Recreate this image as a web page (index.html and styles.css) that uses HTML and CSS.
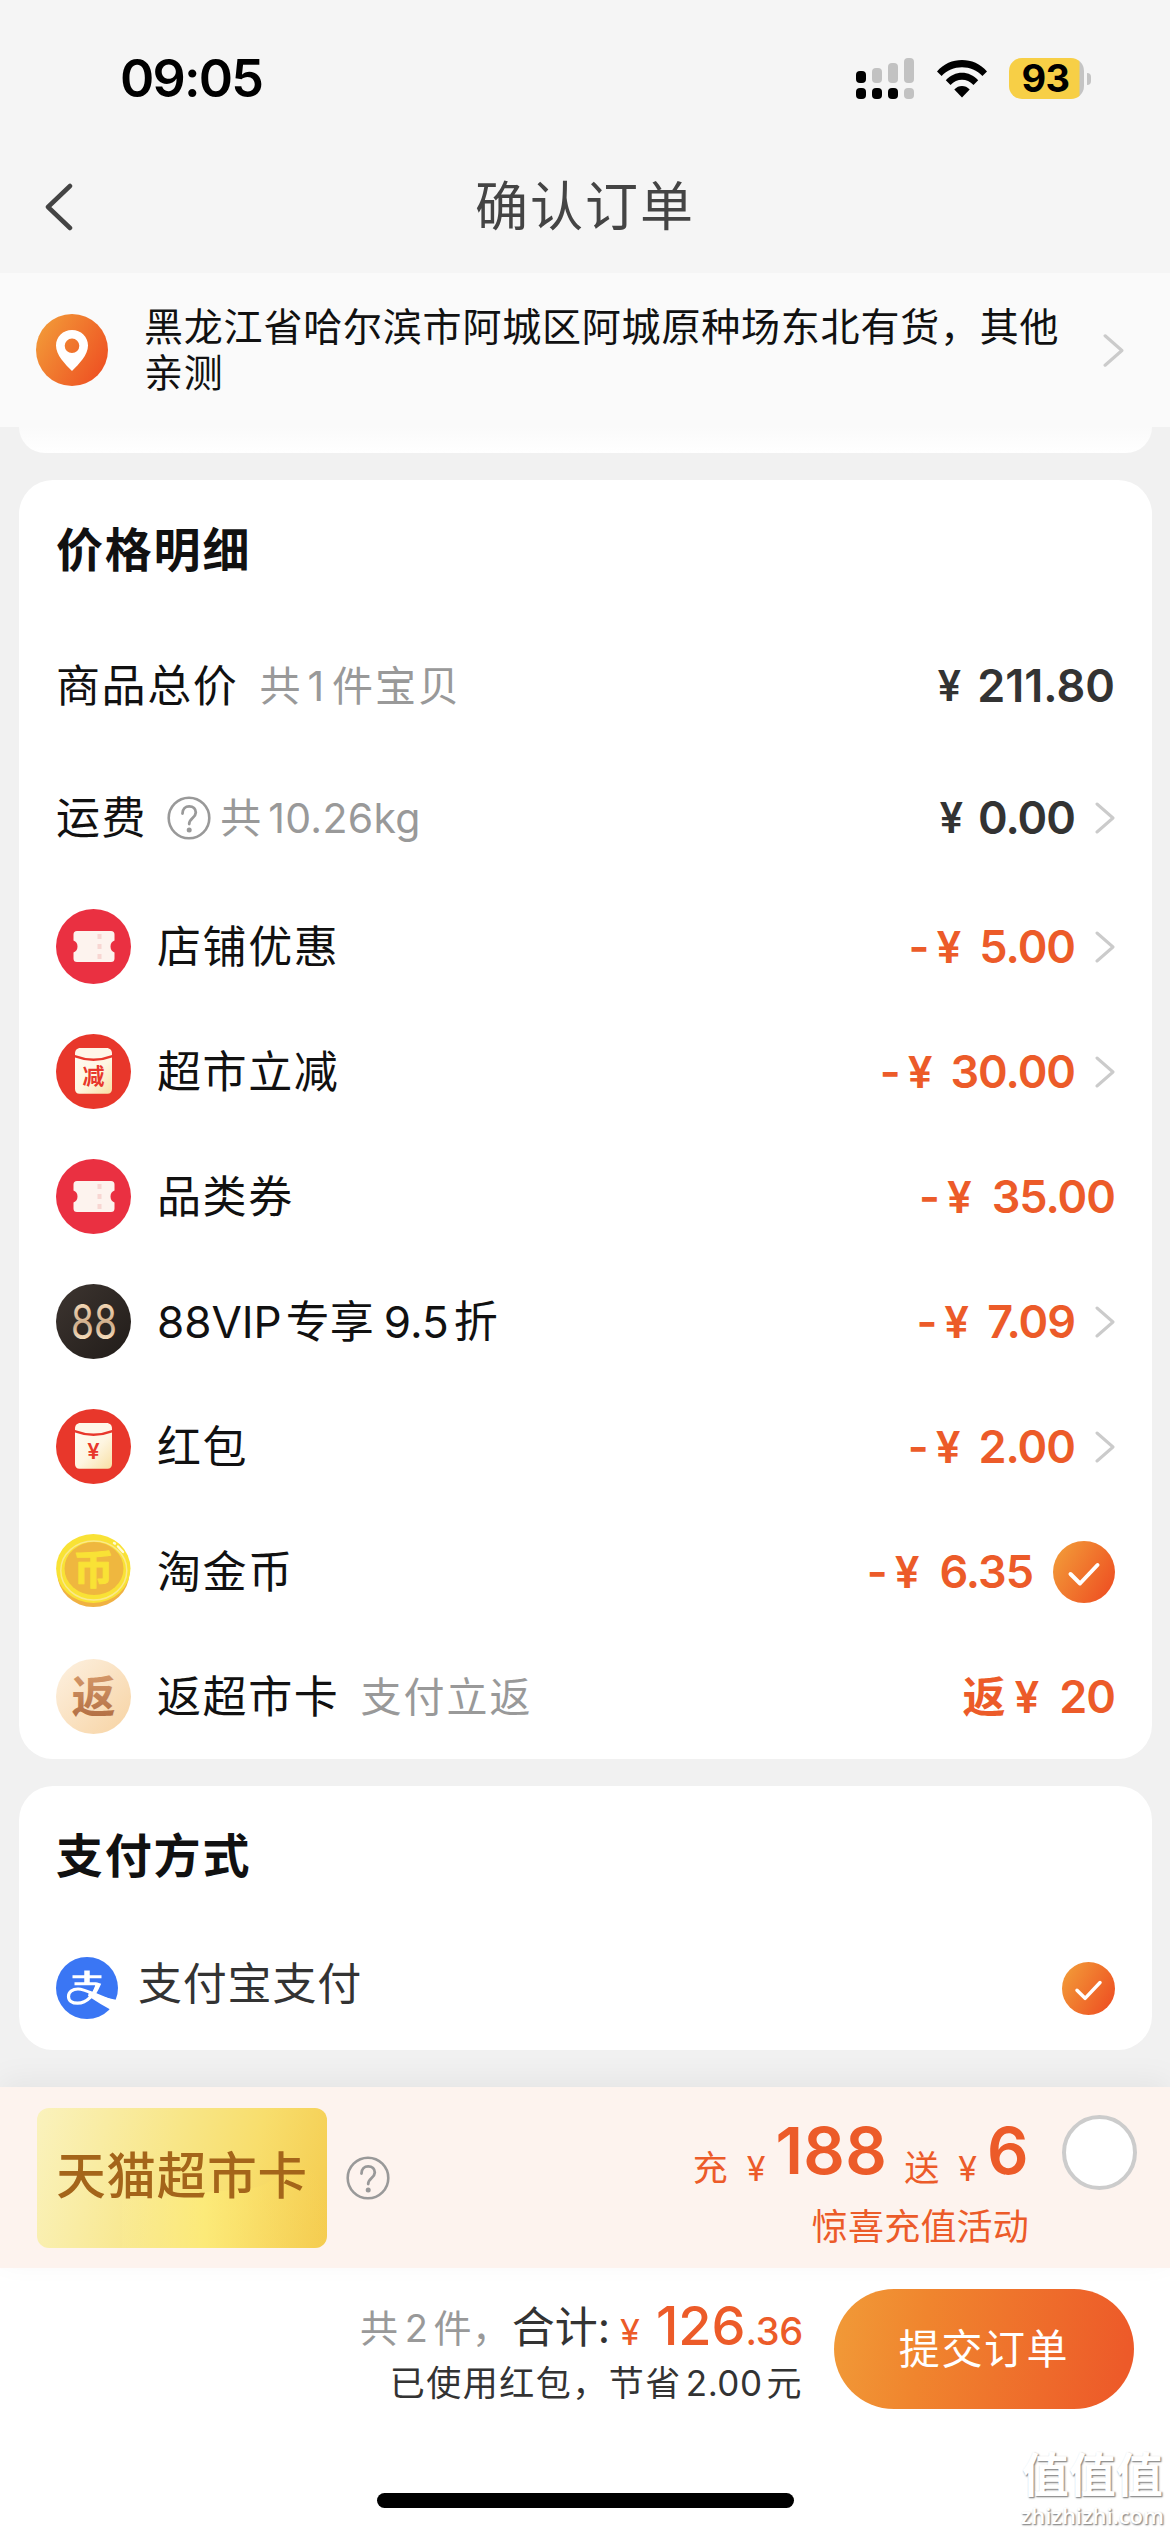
FILE: index.html
```html
<!DOCTYPE html>
<html lang="zh-CN">
<head>
<meta charset="utf-8">
<title>确认订单</title>
<link rel="stylesheet" href="styles.css">
</head>
<body>
<svg class="defs" width="0" height="0" aria-hidden="true">
  <defs>
    <linearGradient id="orange" x1="0" x2="1" y1="0.2" y2="0.8"><stop offset="0" stop-color="#f29a38"/><stop offset="1" stop-color="#ee4f22"/></linearGradient>
    <linearGradient id="paper" x1="0" x2="1" y1="0" y2="1"><stop offset="0" stop-color="#fffaf0"/><stop offset="0.5" stop-color="#fef6e2"/><stop offset="1" stop-color="#f8dfa4"/></linearGradient>
    <linearGradient id="cream" x1="0" x2="1" y1="0" y2="1"><stop offset="0" stop-color="#fdf1e1"/><stop offset="1" stop-color="#f7d3a3"/></linearGradient>
    <linearGradient id="bronze" x1="0" x2="0" y1="0" y2="1"><stop offset="0" stop-color="#dda374"/><stop offset="1" stop-color="#ad683d"/></linearGradient>
    <linearGradient id="night" x1="0" x2="1" y1="0" y2="1"><stop offset="0" stop-color="#3d3530"/><stop offset="1" stop-color="#211c19"/></linearGradient>
    <linearGradient id="sand" x1="0" x2="0" y1="0" y2="1"><stop offset="0.2" stop-color="#f3d7b5"/><stop offset="0.55" stop-color="#cfae8c"/><stop offset="0.8" stop-color="#f5dcbc"/></linearGradient>
    <symbol id="chev" viewBox="0 0 20 32"><path d="M2 2l16 14L2 30" fill="none" stroke="#cbcbcb" stroke-width="3" stroke-linecap="round" stroke-linejoin="round"/></symbol>
    <symbol id="check" viewBox="0 0 62 62"><circle cx="31" cy="31" r="31" fill="url(#orange)"/><path d="M17.500 33l9.500 9.500L44.500 24" fill="none" stroke="#fff" stroke-width="4" stroke-linecap="round" stroke-linejoin="round"/></symbol>
    <symbol id="help" viewBox="0 0 44 44"><circle cx="22" cy="22" r="20.300" fill="none" stroke="#999" stroke-width="2.600"/><path d="M15.500 17.500c0-4.500 3-7.200 6.700-7.200 4 0 6.600 2.700 6.600 6.200 0 5.200-6.600 5.800-6.600 11.500" fill="none" stroke="#999" stroke-width="2.800" stroke-linecap="round"/><circle cx="22.200" cy="34" r="2.500" fill="#999"/></symbol>
    <symbol id="ticket" viewBox="0 0 75 75"><circle cx="37.500" cy="37.500" r="37.500" fill="#ea3041"/><path d="M21 22h34a3.500 3.500 0 0 1 3.500 3.500v6a6.500 6.500 0 0 0 0 12v6A3.500 3.500 0 0 1 55 53H21a3.500 3.500 0 0 1-3.500-3.500v-6a6.500 6.500 0 0 0 0-12v-6A3.500 3.500 0 0 1 21 22z" fill="#fdf3ee"/><path d="M43.500 25v26" stroke="#f8d6d2" stroke-width="4" stroke-dasharray="5 5" fill="none"/></symbol>
    <symbol id="envelope" viewBox="0 0 75 75"><circle cx="37.500" cy="37.500" r="37.500" fill="#e8372b"/><path d="M19 21v-1.500c0-3.200 2-5.500 5.500-5.500h26c3.500 0 5.500 2.300 5.500 5.500V21Q37.500 28 19 21z" fill="#fff6e8"/><path d="M19 23.500Q37.500 30.500 56 23.500V55c0 3-1.800 4.700-4.500 4.700h-28C20.800 59.700 19 58 19 55z" fill="url(#paper)"/></symbol>
  </defs>
</svg>

<header class="top">
  <div class="status">
    <span class="time">09:05</span>
    <div class="signals">
      <svg class="cell" viewBox="0 0 58 42"><g fill="#000"><rect y="13" width="10" height="12" rx="4"/><rect y="30" width="10" height="11" rx="4"/><rect x="16" y="30" width="10" height="11" rx="4"/><rect x="32" y="30" width="10" height="11" rx="4"/></g><g fill="#c2c2c2"><rect x="16" y="10" width="10" height="15" rx="4"/><rect x="32" y="5" width="10" height="20" rx="4"/><rect x="48" width="10" height="25" rx="4"/><rect x="48" y="30" width="10" height="11" rx="4"/></g></svg>
      <svg class="wifi" viewBox="0 0 50 38"><path d="M0 11.500C13-3.800 37-3.800 50 11.500l-4.600 4.600C35 4.200 15 4.200 4.600 16.100z"/><path d="M8.800 20.300c9-10 23.400-10 32.400 0l-4.700 4.800c-6.500-7-16.500-7-23 0z"/><path d="M17.300 29.400c4.400-4.600 11-4.600 15.400 0L25 37.500z"/></svg>
      <div class="battery"><span class="cellbox">93</span><i class="nub"></i></div>
    </div>
  </div>
  <div class="nav">
    <svg class="back" viewBox="0 0 30 48"><path d="M26 3L4 24l22 21" fill="none" stroke="#444" stroke-width="4.500" stroke-linecap="round" stroke-linejoin="round"/></svg>
    <h1>确认订单</h1>
  </div>
</header>

<section class="address">
  <svg class="pin" viewBox="0 0 72 72"><circle cx="36" cy="36" r="36" fill="url(#orange)"/><path fill-rule="evenodd" d="M36 16c-9 0-16 6.800-16 15.500C20 41 29 50 36 57c7-7 16-16 16-25.500C52 22.800 45 16 36 16zm0 8.500a7.300 7.300 0 1 1 0 14.600 7.300 7.300 0 0 1 0-14.600z" fill="#fff"/></svg>
  <p>黑龙江省哈尔滨市阿城区阿城原种场东北有货，其他亲测</p>
  <svg class="chev big"><use href="#chev"/></svg>
</section>

<main>
  <div class="card stub"></div>

  <section class="card">
    <h2>价格明细</h2>
    <div class="row total"><span class="label">商品总价</span><span class="note">共<b>1</b>件宝贝</span><span class="amount dark"><i>¥</i>211.80</span></div>
    <div class="row freight"><span class="label">运费</span><svg class="help inset"><use href="#help"/></svg><span class="note tight">共<b>10.26kg</b></span><span class="amount dark"><i>¥</i>0.00</span><svg class="chev"><use href="#chev"/></svg></div>
    <div class="row"><svg class="icon"><use href="#ticket"/></svg><span class="label">店铺优惠</span><span class="amount"><em>-</em><i>¥</i>5.00</span><svg class="chev"><use href="#chev"/></svg></div>
    <div class="row"><svg class="icon" viewBox="0 0 75 75"><use href="#envelope"/><text class="seal" x="37.500" y="50">减</text></svg><span class="label">超市立减</span><span class="amount"><em>-</em><i>¥</i>30.00</span><svg class="chev"><use href="#chev"/></svg></div>
    <div class="row"><svg class="icon"><use href="#ticket"/></svg><span class="label">品类券</span><span class="amount wide"><em>-</em><i>¥</i>35.00</span></div>
    <div class="row"><svg class="icon" viewBox="0 0 75 75"><circle cx="37.500" cy="37.500" r="37.500" fill="url(#night)"/><text class="vip" x="38" y="54.500" textLength="46" lengthAdjust="spacingAndGlyphs">88</text></svg><span class="label vip-label">88VIP<u class="g4"></u>专享<u class="g10"></u>9.5<u class="g5"></u>折</span><span class="amount"><em>-</em><i>¥</i>7.09</span><svg class="chev"><use href="#chev"/></svg></div>
    <div class="row"><svg class="icon" viewBox="0 0 75 75"><use href="#envelope"/><text class="seal yen" x="37.500" y="50">¥</text></svg><span class="label">红包</span><span class="amount"><em>-</em><i>¥</i>2.00</span><svg class="chev"><use href="#chev"/></svg></div>
    <div class="row"><svg class="icon" viewBox="0 0 75 75"><ellipse cx="37.300" cy="39" rx="36" ry="34" fill="#f0b142"/><ellipse cx="37.300" cy="34.500" rx="37.200" ry="34.500" fill="#f9e235"/><ellipse cx="37.800" cy="36.500" rx="33" ry="29.500" fill="none" stroke="#fbe98a" stroke-width="1.500"/><ellipse cx="38" cy="34.500" rx="29.500" ry="26.500" fill="#efb73f"/><path d="M58 9l1 .6M62 12.500l5 5.500" stroke="#fffbd8" stroke-width="2.400" stroke-linecap="round"/><text class="coin" x="37.500" y="50">币</text></svg><span class="label">淘金币</span><span class="amount wide"><em>-</em><i>¥</i>6.35</span><svg class="check"><use href="#check"/></svg></div>
    <div class="row"><svg class="icon" viewBox="0 0 75 75"><circle cx="37.500" cy="37.500" r="37.500" fill="url(#cream)"/><text class="rebate" x="37.500" y="53.500">返</text></svg><span class="label">返超市卡</span><span class="note">支付立返</span><span class="amount wide"><em class="word">返</em><i>¥</i>20</span></div>
  </section>

  <section class="card pay">
    <h2>支付方式</h2>
    <div class="row">
      <svg class="alipay" viewBox="0 0 62 62"><circle cx="31" cy="31" r="31" fill="#3a76f4"/><path d="M16.500 19.800h29M18.500 26.800h22" fill="none" stroke="#fff" stroke-width="3"/><path d="M31 13.500v13" fill="none" stroke="#fff" stroke-width="5.500"/><path d="M41.500 26.500C38.500 38 31 46 21.500 46.200c-5.500 0-9-2.700-9-6.700 0-4.500 4-7.500 9.500-7.500 7.500 0 17.500 6.500 36 13" fill="none" stroke="#fff" stroke-width="3.200"/><path d="M40.500 25.300l4.700 1.500Q42.500 33 39.500 37.800l-3.500-1.600Q39 31.500 40.500 25.300z" fill="#fff"/><path d="M33 34.500q11 5.500 28 8.500l-5 10.500Q44 47 32 39z" fill="#fff"/></svg>
      <span class="label">支付宝支付</span>
      <svg class="check small"><use href="#check"/></svg>
    </div>
  </section>
</main>

<footer>
  <section class="promo">
    <div class="gold">
      <svg class="sheen" viewBox="0 0 290 140"><defs><linearGradient id="fold" x1="0" x2="1" y1="0" y2="0"><stop offset="0" stop-color="#fff39a" stop-opacity="0.1"/><stop offset="0.400" stop-color="#fff07a" stop-opacity="0.600"/><stop offset="1" stop-color="#f7cf52" stop-opacity="0.200"/></linearGradient></defs><path d="M85 140V92Q170 84 215 80C240 76 245 58 258 57c20 0 30 20 32 50v33z" fill="url(#fold)"/></svg>
      <span>天猫超市卡</span>
    </div>
    <svg class="help"><use href="#help"/></svg>
    <div class="offer">
      <div class="deal"><span>充</span><i>¥</i><strong>188</strong><span class="give">送</span><i>¥</i><strong>6</strong></div>
      <div class="tagline">惊喜充值活动</div>
    </div>
    <span class="radio"></span>
  </section>
  <section class="checkout">
    <div class="sum">
      <div class="line1"><span class="count">共<b>2</b>件，</span><span class="lead">合计<b>:</b></span><i>¥</i><strong>126</strong><small>.36</small></div>
      <div class="line2">已使用红包，节省<b>2.00</b>元</div>
    </div>
    <button class="submit">提交订单</button>
  </section>
  <div class="home"></div>
</footer>
<div class="mark"><span>值值值</span><small>zhizhizhi.com</small></div>
</body>
</html>
```

FILE: styles.css
```css
* { box-sizing: border-box; }

body {
  margin: 0;
  width: 1170px;
  height: 2532px;
  display: flex;
  flex-direction: column;
  position: relative;
  overflow: hidden;
  background: #f1f1f1;
  color: #111;
  font-family: Inter, "Noto Sans CJK SC", sans-serif;
  white-space: nowrap;
}

.defs { position: absolute; }
svg { display: block; flex: none; }
i, em, u { font-style: normal; text-decoration: none; }
b { font-weight: inherit; }
h1, h2, p { margin: 0; font-weight: 400; }

/* Status bar and title */
.top { height: 273px; background: #f5f5f5; }
.status {
  height: 157px;
  padding: 0 79px 0 120px;
  display: flex;
  align-items: center;
  justify-content: space-between;
}
.time { font-size: 52px; font-weight: 600; line-height: 60px; letter-spacing: -1.8px; color: #000; }
.signals { display: flex; align-items: center; }
.cell { width: 58px; height: 42px; }
.wifi { width: 50px; height: 38px; margin-left: 23px; }
.battery { display: flex; align-items: center; margin-left: 22px; gap: 3px; }
.cellbox {
  width: 75px;
  height: 41px;
  padding-right: 2px;
  border-radius: 13px;
  background: linear-gradient(90deg, #f7cf46 70px, #c4c4c4 71px);
  color: #000;
  font-size: 38px;
  font-weight: 700;
  line-height: 41px;
  letter-spacing: -0.5px;
  text-align: center;
}
.nub { width: 4px; height: 12px; border-radius: 0 5px 5px 0; background: #c4c4c4; }
.nav { height: 100px; display: grid; grid-template-columns: 120px 1fr 120px; align-items: center; }
.back { width: 30px; height: 48px; margin-left: 44px; }
.nav h1 { font-size: 53px; line-height: 60px; letter-spacing: 2px; text-align: center; color: #444; }

/* Address bar */
.address {
  height: 154px;
  padding: 0 46px 0 36px;
  display: flex;
  align-items: center;
  background: #fafafa;
}
.pin { width: 72px; height: 72px; }
.address p { width: 940px; margin-left: 36px; font-size: 39px; line-height: 46px; letter-spacing: 0.8px; white-space: normal; }
.chev { width: 20px; height: 32px; margin-left: 20px; }
.big { margin-left: auto; width: 21px; height: 35px; }

/* Cards */
main { flex: 1; display: flex; flex-direction: column; gap: 27px; padding: 0 18px 0 19px; }
.card { border-radius: 34px; background: #fff; padding: 0 37px; }
.stub { height: 26px; border-radius: 0 0 34px 34px; background: linear-gradient(#fafafa, #fff); }
.card h2 { height: 140px; font-size: 47px; font-weight: 700; line-height: 140px; letter-spacing: 1.8px; }
.row { height: 125px; display: flex; align-items: center; }
.total { height: 131px; }
.freight { height: 133px; }
.icon { width: 75px; height: 75px; }
.label { font-size: 44px; line-height: 60px; letter-spacing: 1.6px; }
.icon + .label { margin-left: 26px; }
.vip-label { letter-spacing: 0; }
.g4 { margin-left: 4px; }
.g5 { margin-left: 5px; }
.g10 { margin-left: 10px; }
.note { margin-left: 21px; font-size: 41px; line-height: 60px; letter-spacing: 2px; color: #999; }
.note b { margin-left: 5px; letter-spacing: 0; }
.total .note b { margin-right: 8px; }
.note.tight { margin-left: 9px; }
.tight b { letter-spacing: 0.3px; }
.inset { margin-left: 20px; }
.help { width: 44px; height: 44px; }
.amount {
  margin-left: auto;
  display: flex;
  align-items: center;
  color: #ec5b29;
  font-size: 45px;
  font-weight: 600;
  line-height: 60px;
  letter-spacing: -1px;
}
.amount i { font-size: 44px; margin-right: 19px; }
.amount em { margin-right: 8px; }
.wide i { margin-right: 21px; }
.amount .word { margin-right: 10px; font-size: 43px; }
.dark { color: #333; }
.dark i { font-size: 42px; margin-right: 16px; }
.total .dark { letter-spacing: 0; }
.check { width: 62px; height: 62px; margin-left: 20px; }
.small { width: 53px; height: 53px; margin-left: auto; }

.icon text { font-family: "Noto Sans CJK SC", sans-serif; font-weight: 700; text-anchor: middle; }
.icon .seal { font-size: 22px; fill: #e8372b; }
.icon .yen { font-family: Inter, sans-serif; font-weight: 600; }
.icon .vip { font-family: Inter, sans-serif; font-weight: 400; font-size: 48px; fill: url(#sand); }
.icon .coin { font-size: 40px; fill: #f9e235; stroke: #f9e235; stroke-width: 1px; stroke-linejoin: round; }
.icon .rebate { font-size: 44px; fill: url(#bronze); }

.pay .row { height: 124px; }
.pay .label { margin: -8px 0 0 20px; color: #333; letter-spacing: 0.8px; }
.alipay { width: 62px; height: 62px; }

/* Recharge offer */
footer { height: 445px; position: relative; background: #fff; }
.promo {
  height: 181px;
  padding: 0 33px 0 37px;
  display: flex;
  align-items: center;
  background: #fdf3ee;
  box-shadow: 0 -8px 28px rgba(0, 0, 0, 0.05);
}
.gold {
  position: relative;
  width: 290px;
  height: 140px;
  overflow: hidden;
  border-radius: 12px;
  background: linear-gradient(105deg, #faf2bd, #f8e688 45%, #f8de6d 70%, #f4cb4e);
  color: #a4651a;
  font-size: 49.5px;
  font-weight: 500;
  line-height: 136px;
  letter-spacing: 0.8px;
  text-align: center;
}
.sheen { position: absolute; inset: 0; width: 290px; height: 140px; }
.gold span { position: relative; }
.gold + .help { margin-left: 19px; }
.offer {
  height: 181px;
  margin-left: auto;
  padding-top: 32px;
  display: flex;
  flex-direction: column;
  align-items: flex-end;
  color: #ec5b29;
}
.deal { display: flex; align-items: baseline; height: 84px; line-height: 64px; font-size: 35px; }
.deal strong { font-size: 65px; font-weight: 600; line-height: 64px; letter-spacing: 0.4px; }
.deal i { margin: 0 10px 0 19px; font-size: 34px; position: relative; top: 7px; }
.deal span { position: relative; top: 7px; }
.deal .give { margin-left: 17px; }
.tagline { font-size: 36px; line-height: 48px; letter-spacing: 0.2px; }
.radio { width: 75px; height: 75px; margin: -51px 0 0 33px; border: 4px solid #ccc; border-radius: 50%; background: #fff; }

/* Checkout bar */
.checkout { height: 225px; padding: 21px 36px 0 0; display: flex; justify-content: flex-end; gap: 31px; }
.sum { display: flex; flex-direction: column; align-items: flex-end; color: #333; }
.line1 { height: 64px; display: flex; align-items: baseline; font-size: 43px; line-height: 73px; color: #ec5b29; }
.line1 .count { position: relative; top: -3px; font-size: 38px; letter-spacing: 0.6px; color: #999; }
.line1 .count b { margin: 0 5px 0 6px; }
.line1 .lead { position: relative; top: -2px; margin-left: 1px; color: #333; }
.line1 i { margin: 0 16px 0 10px; font-size: 36px; }
.line1 strong { font-size: 54px; font-weight: 450; }
.line1 small { font-size: 38px; font-weight: 450; letter-spacing: -0.3px; }
.line2 { font-size: 35px; line-height: 60px; letter-spacing: 1.5px; }
.line2 b { margin: 0 4px; letter-spacing: 0.5px; }
.submit {
  width: 300px;
  height: 120px;
  padding: 0;
  border: 0;
  border-radius: 60px;
  background: linear-gradient(100deg, #f19b38, #f0852e 30%, #ed5a29 95%);
  color: #fff;
  font: 41px/60px Inter, "Noto Sans CJK SC", sans-serif;
  letter-spacing: 1.6px;
}
.home { width: 417px; height: 15px; margin: 0 auto; border-radius: 8px; background: #000; }

.mark {
  position: absolute;
  right: 6px;
  bottom: 4px;
  display: flex;
  flex-direction: column;
  align-items: center;
  color: #fff;
  text-shadow: 1px 1px 2px #8a8a8a, 1px 1px 1px #aaa;
}
.mark span { font: 700 47px/60px "Noto Sans CJK SC", sans-serif; }
.mark small { font: 600 22px/26px "Open Sans", sans-serif; }
```
